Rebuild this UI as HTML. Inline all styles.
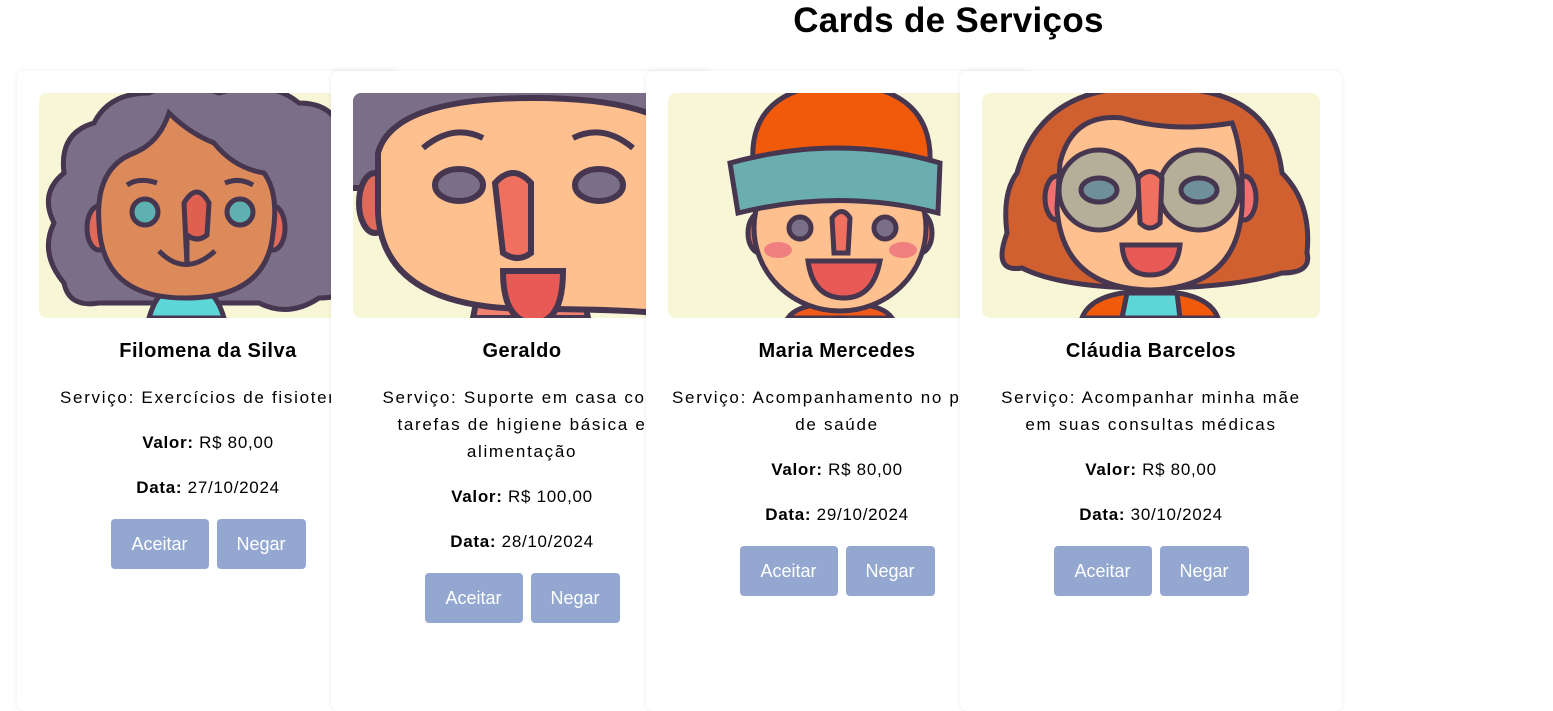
<!DOCTYPE html>
<html><head><meta charset="utf-8"><style>
body{margin:0;background:#fff;font-family:"Liberation Sans",sans-serif;width:1553px;height:672px;overflow:hidden;position:relative}
h1{position:absolute;top:0;left:0;width:1897px;margin:0;text-align:center;font-size:35px;font-weight:bold;line-height:42px;color:#000;letter-spacing:0.3px}
.card{position:absolute;top:71px;width:382px;height:640px;background:#fff;border-radius:8px;box-shadow:0 0 6px rgba(0,0,0,.08);text-align:center}
.img{position:absolute;left:22px;top:22px;width:338px;height:225px;border-radius:8px;overflow:hidden;background:#f7f7d8}
.img svg{display:block}
.body{position:absolute;left:22px;top:266px;width:338px}
.name{font-weight:bold;font-size:20px;line-height:28px;margin:0;letter-spacing:0.5px}
.svc{font-size:17px;line-height:27px;margin:19px 0 0;white-space:nowrap;letter-spacing:1.7px}
.p{font-size:17px;line-height:27px;margin:18px 0 0;letter-spacing:0.7px}
.btns{margin-top:18px}
.b{display:inline-block;width:98px;height:50px;line-height:50px;background:#93a7d0;color:#fff;font-size:18px;border-radius:4px;margin:0 4px}
.b2{width:89px}
</style></head><body>
<h1>Cards de Serviços</h1>

<div class="card" style="left:17px;z-index:1">
<div class="img"><svg width="338" height="225" viewBox="0 0 338 225">
<g stroke="#46364f" stroke-width="5">
<path d="M25 190 Q0 160 15 130 Q0 100 25 80 Q20 40 55 30 Q70 0 110 0 Q140 -15 180 0 Q230 -15 260 10 Q300 10 305 50 Q340 70 330 110 Q345 140 325 170 Q320 205 280 205 Q250 225 220 210 L60 210 Q30 215 25 190Z" fill="#7b6f88"/>
<path d="M110 225 Q120 190 146 190 Q175 190 185 225Z" fill="#5dd6d8"/>
<ellipse cx="60" cy="135" rx="12" ry="22" fill="#e06a5a"/><ellipse cx="234" cy="135" rx="12" ry="22" fill="#e06a5a"/>
<path d="M60 130 Q56 75 95 60 Q120 50 130 20 Q150 40 175 50 Q195 75 225 80 Q240 100 234 140 Q228 205 146 205 Q62 205 60 130Z" fill="#dd8a5a"/>
<circle cx="106" cy="119" r="13" fill="#5fb0b0"/><circle cx="201" cy="119" r="13" fill="#5fb0b0"/>
<path d="M148 172 L145 110 Q158 88 170 110 L168 142 Q158 150 148 142Z" fill="#e06050"/>
<path d="M120 158 Q146 185 176 158" fill="none"/>
<path d="M88 92 Q100 84 118 90 M186 90 Q200 84 214 92" fill="none"/>
</g></svg></div>
<div class="body"><p class="name">Filomena da Silva</p><p class="svc" style="text-align:left;margin-left:21px">Serviço: Exercícios de fisioterapia</p><p class="p"><b>Valor:</b> R$ 80,00</p><p class="p"><b>Data:</b> 27/10/2024</p><div class="btns"><span class="b">Aceitar</span><span class="b b2">Negar</span></div></div>
</div>

<div class="card" style="left:331px;z-index:2">
<div class="img"><svg width="338" height="225" viewBox="0 0 338 225">
<g stroke="#46364f" stroke-width="6">
<rect x="-5" y="-5" width="350" height="100" fill="#7b6f88"/>
<ellipse cx="22" cy="110" rx="16" ry="30" fill="#e06a5a"/>
<path d="M120 225 L125 200 L230 200 L235 225Z" fill="#f08070"/>
<path d="M25 60 Q40 5 180 5 Q320 5 345 60 L345 225 Q300 216 176 216 Q30 215 25 120Z" fill="#fdc08e"/>
<path d="M70 55 Q100 30 130 45 M220 45 Q250 30 280 55" fill="none"/>
<ellipse cx="106" cy="92" rx="24" ry="16" fill="#7b6f88"/><ellipse cx="246" cy="92" rx="24" ry="16" fill="#7b6f88"/>
<path d="M150 160 L142 90 Q160 70 178 90 L178 160 Q165 170 150 160Z" fill="#f07060"/>
<path d="M150 178 L210 178 Q210 230 180 230 Q150 228 150 178Z" fill="#e85a55"/>
</g></svg></div>
<div class="body"><p class="name">Geraldo</p><p class="svc">Serviço: Suporte em casa com<br>tarefas de higiene básica e<br>alimentação</p><p class="p"><b>Valor:</b> R$ 100,00</p><p class="p"><b>Data:</b> 28/10/2024</p><div class="btns"><span class="b">Aceitar</span><span class="b b2">Negar</span></div></div>
</div>

<div class="card" style="left:646px;z-index:3">
<div class="img"><svg width="338" height="225" viewBox="0 0 338 225">
<g stroke="#46364f" stroke-width="5">
<path d="M120 225 Q130 210 172 210 Q214 210 224 225Z" fill="#f05a1a"/>
<ellipse cx="92" cy="140" rx="12" ry="20" fill="#e06a5a"/><ellipse cx="252" cy="140" rx="12" ry="20" fill="#e06a5a"/>
<ellipse cx="172" cy="135" rx="86" ry="83" fill="#fdc08e"/>
<path d="M85 70 Q80 -5 172 -10 Q265 -5 262 70Z" fill="#f05a0a"/>
<path d="M62 70 Q172 40 272 70 L270 120 Q172 95 70 120Z" fill="#6aaeb0"/>
<circle cx="132" cy="135" r="11" fill="#7b6f88"/><circle cx="217" cy="135" r="11" fill="#7b6f88"/>
<path d="M166 160 L164 125 Q174 112 182 125 L180 160Z" fill="#f07060"/>
<path d="M140 168 L212 168 Q205 205 176 205 Q145 205 140 168Z" fill="#e85a55"/>
</g>
<ellipse cx="110" cy="157" rx="14" ry="8" fill="#f08080"/><ellipse cx="235" cy="157" rx="14" ry="8" fill="#f08080"/>
</svg></div>
<div class="body"><p class="name">Maria Mercedes</p><p class="svc" style="text-align:left;margin-left:4px">Serviço: Acompanhamento no processo</p><p class="svc" style="margin-top:0">de saúde</p><p class="p"><b>Valor:</b> R$ 80,00</p><p class="p"><b>Data:</b> 29/10/2024</p><div class="btns"><span class="b">Aceitar</span><span class="b b2">Negar</span></div></div>
</div>

<div class="card" style="left:960px;z-index:4">
<div class="img"><svg width="338" height="225" viewBox="0 0 338 225">
<g stroke="#46364f" stroke-width="5">
<path d="M40 175 Q10 180 25 140 Q20 100 35 80 Q60 -10 168 -5 Q290 -10 300 80 Q330 110 325 160 Q330 180 300 180 Q250 195 168 195 Q80 195 40 175Z" fill="#d0602f"/>
<path d="M100 225 Q110 198 168 198 Q226 198 236 225Z" fill="#f05a0a"/>
<path d="M140 225 L145 200 L195 200 L198 225Z" fill="#5dd6d8"/>
<ellipse cx="75" cy="105" rx="12" ry="22" fill="#f07070"/><ellipse cx="262" cy="105" rx="12" ry="22" fill="#f07070"/>
<path d="M78 70 Q90 20 140 25 Q190 40 250 30 Q262 60 260 115 Q255 195 168 197 Q80 195 75 115Z" fill="#fdc08e"/>
<circle cx="117" cy="97" r="40" fill="#b5ae98"/><circle cx="217" cy="97" r="40" fill="#b5ae98"/>
<ellipse cx="117" cy="97" rx="18" ry="12" fill="#6f8f9a"/><ellipse cx="217" cy="97" rx="18" ry="12" fill="#6f8f9a"/>
<path d="M158 130 L156 85 Q168 72 180 85 L178 130 Q168 140 158 130Z" fill="#f07060"/>
<path d="M140 152 L198 152 Q195 182 168 182 Q142 182 140 152Z" fill="#e85a55"/>
</g></svg></div>
<div class="body"><p class="name">Cláudia Barcelos</p><p class="svc">Serviço: Acompanhar minha mãe<br>em suas consultas médicas</p><p class="p"><b>Valor:</b> R$ 80,00</p><p class="p"><b>Data:</b> 30/10/2024</p><div class="btns"><span class="b">Aceitar</span><span class="b b2">Negar</span></div></div>
</div>
</body></html>
